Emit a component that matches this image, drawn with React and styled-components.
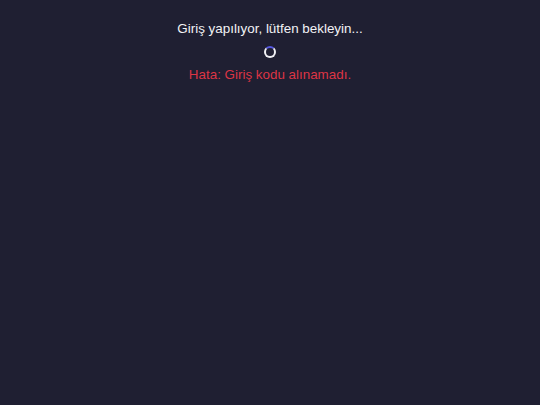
import React from "react";
import styled, { createGlobalStyle, keyframes } from "styled-components";

const GlobalStyle = createGlobalStyle`
  html, body {
    margin: 0;
    padding: 0;
    background: #1f1f32;
  }
  body {
    font-family: "Liberation Sans", Arial, sans-serif;
  }
`;

const spin = keyframes`
  to { transform: rotate(360deg); }
`;

const Page = styled.div`
  min-height: 405px;
  background: #1f1f32;
  display: flex;
  flex-direction: column;
  align-items: center;
  padding-top: 21px;
  box-sizing: border-box;
`;

const Message = styled.p`
  margin: 0;
  font-size: 13.4px;
  line-height: 16px;
  color: ${(p) => (p.$error ? "#dc3545" : "#f2f2f5")};
`;

const Spinner = styled.div`
  width: 8px;
  height: 8px;
  margin: 9px 0 9px;
  border: 2px solid #f0f0f5;
  border-top-color: #5558e0;
  border-radius: 50%;
  animation: ${spin} 1s linear infinite;
`;

export default function App() {
  return (
    <>
      <GlobalStyle />
      <Page>
        <Message>Giriş yapılıyor, lütfen bekleyin...</Message>
        <Spinner />
        <Message $error>Hata: Giriş kodu alınamadı.</Message>
      </Page>
    </>
  );
}
